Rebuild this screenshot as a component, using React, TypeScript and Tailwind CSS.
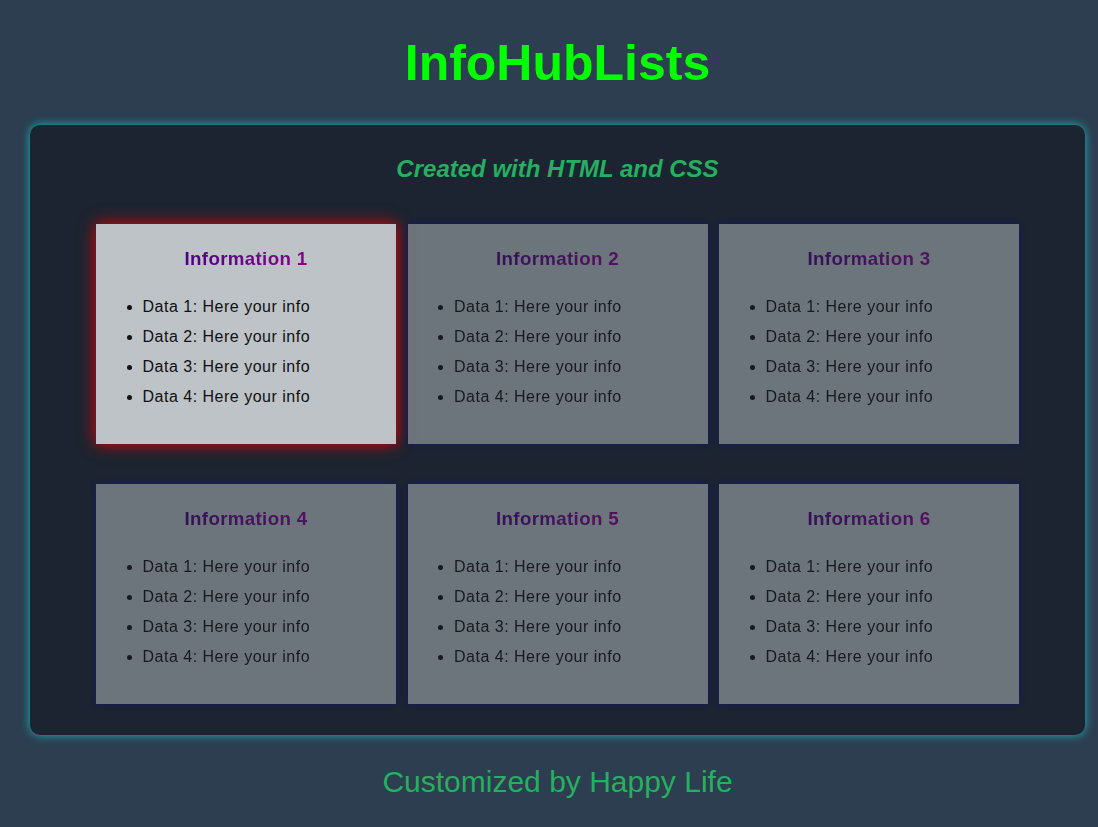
const cards = [1, 2, 3, 4, 5, 6];
const rows = [1, 2, 3, 4];

function InfoCard({ n, active }: { n: number; active?: boolean }) {
  return (
    <div
      className={
        active
          ? 'h-[220px] bg-[#bdc3c7] px-[20px] pt-[24px] shadow-[0_0_15px_#e60000]'
          : 'h-[220px] bg-[#bdc3c7] px-[20px] pt-[24px] opacity-50 shadow-[0_0_6px_#0a0a9a]'
      }
    >
      {/* Title */}
      <h3 className="text-center text-[18.72px] font-bold leading-[22px] tracking-[0.35px]">
        <span className="bg-gradient-to-r from-[#4b0082] to-[#8b008b] bg-clip-text text-transparent">
          Information {n}
        </span>
      </h3>

      {/* Data list */}
      <ul className="mt-[21.5px] list-disc pl-[26.5px] text-[16px] leading-[30px] tracking-[0.5px] text-[#111]">
        {rows.map((r) => (
          <li key={r}>Data {r}: Here your info</li>
        ))}
      </ul>
    </div>
  );
}

export default function App() {
  return (
    <div className="min-h-screen bg-[#2c3e50] pl-[30px] pr-[13px] pt-[35px] pb-[30px] font-['Liberation_Sans',Arial,sans-serif]">
      {/* Header */}
      <h1 className="text-center text-[50px] font-bold leading-[56px] text-[#00ff00]">
        InfoHubLists
      </h1>

      {/* Main panel */}
      <div className="mt-[34px] h-[610px] rounded-[10px] bg-[#1b2430] pt-[32px] shadow-[0_0_10px_#1fb5bf]">
        <h2 className="text-center text-[24px] font-bold italic leading-[24px] text-[#27ae60]">
          Created with HTML and CSS
        </h2>

        <div className="mt-[43px] grid grid-cols-[repeat(3,300px)] justify-center gap-x-[11.5px] gap-y-[40px]">
          {cards.map((n) => (
            <InfoCard key={n} n={n} active={n === 1} />
          ))}
        </div>
      </div>

      {/* Footer */}
      <p className="mt-[30px] text-center text-[30px] leading-[34px] text-[#27ae60]">
        Customized by Happy Life
      </p>
    </div>
  );
}
